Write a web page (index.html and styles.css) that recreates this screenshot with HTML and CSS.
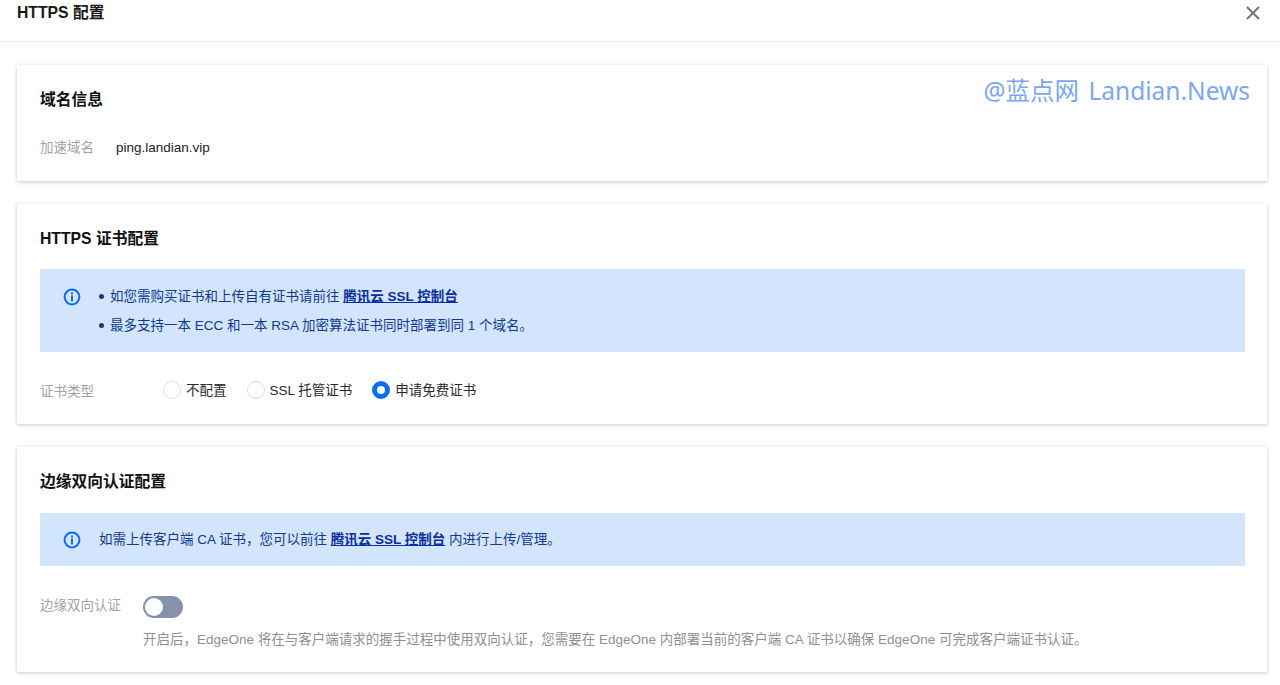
FILE: index.html
```html
<!DOCTYPE html>
<html lang="zh-CN">
<head>
<meta charset="utf-8">
<title>HTTPS 配置</title>
<link rel="stylesheet" href="styles.css">
</head>
<body>
<header class="header">
  <h1 class="header-title">HTTPS 配置</h1>
  <svg class="close" width="14" height="14" viewBox="0 0 14 14"><path d="M1 1L13 13M13 1L1 13" stroke="#757575" stroke-width="2" fill="none"/></svg>
</header>
<main class="content">
  <section class="card card-domain">
    <h2 class="card-title">域名信息</h2>
    <div class="row row-domain">
      <span class="label label-domain">加速域名</span>
      <span class="value">ping.landian.vip</span>
    </div>
    <div class="watermark">@蓝点网 Landian.News</div>
  </section>
  <section class="card card-cert">
    <h2 class="card-title">HTTPS 证书配置</h2>
    <div class="alert alert-multi">
      <svg class="info" width="18" height="18" viewBox="0 0 18 18"><circle cx="9" cy="9" r="7.4" fill="none" stroke="#0a6cff" stroke-width="2"/><rect x="8" y="4.4" width="2" height="2" fill="#0a6cff"/><rect x="8" y="7.4" width="2" height="6" fill="#0a6cff"/></svg>
      <ul class="alert-list">
        <li>如您需购买证书和上传自有证书请前往 <a class="link" href="#">腾讯云 SSL 控制台</a></li>
        <li>最多支持一本 ECC 和一本 RSA 加密算法证书同时部署到同 1 个域名。</li>
      </ul>
    </div>
    <div class="row row-radio">
      <span class="label label-cert">证书类型</span>
      <div class="radios">
        <span class="radio"><i class="dot"></i><span class="radio-text">不配置</span></span>
        <span class="radio"><i class="dot"></i><span class="radio-text">SSL 托管证书</span></span>
        <span class="radio"><i class="dot dot-on"></i><span class="radio-text">申请免费证书</span></span>
      </div>
    </div>
  </section>
  <section class="card card-edge">
    <h2 class="card-title">边缘双向认证配置</h2>
    <div class="alert alert-single">
      <svg class="info" width="18" height="18" viewBox="0 0 18 18"><circle cx="9" cy="9" r="7.4" fill="none" stroke="#0a6cff" stroke-width="2"/><rect x="8" y="4.4" width="2" height="2" fill="#0a6cff"/><rect x="8" y="7.4" width="2" height="6" fill="#0a6cff"/></svg>
      <span class="alert-text">如需上传客户端 CA 证书，您可以前往 <a class="link" href="#">腾讯云 SSL 控制台</a> 内进行上传/管理。</span>
    </div>
    <div class="row row-toggle">
      <span class="label label-edge">边缘双向认证</span>
      <div class="toggle-col">
        <span class="toggle"><i class="knob"></i></span>
        <p class="help">开启后，EdgeOne 将在与客户端请求的握手过程中使用双向认证，您需要在 EdgeOne 内部署当前的客户端 CA 证书以确保 EdgeOne 可完成客户端证书认证。</p>
      </div>
    </div>
  </section>
</main>
</body>
</html>
```
FILE: styles.css
```css
* { box-sizing: border-box; }
html, body { margin: 0; padding: 0; height: 685px; overflow: hidden; background: #fff; }
body { font-family: "Liberation Sans", "Noto Sans CJK SC", sans-serif; font-size: 13.5px; color: #1c1c1c; }
.header { height: 42px; border-bottom: 1px solid #e9e9e9; display: flex; justify-content: space-between; padding: 5px 20px 0 17px; }
.header-title { margin: 0; font-size: 15.75px; line-height: 16px; font-weight: 700; color: #1a1a1a; }
.close { margin-top: 1px; }
.content { padding: 23px 13px 0 17px; display: flex; flex-direction: column; gap: 23px; }
.card { position: relative; background: #fff; box-shadow: 0 1px 4px rgba(0,0,0,.22); padding: 0 22px 0 23px; }
.card-domain { height: 116px; padding-top: 26px; }
.card-cert { height: 220px; padding-top: 26px; }
.card-edge { height: 225px; padding-top: 26px; }
.card-title { margin: 0; font-size: 15.75px; line-height: 18px; font-weight: 700; color: #111; }
.row { display: flex; }
.label { color: #a3a3a3; line-height: 18px; flex: none; }
.value { line-height: 18px; color: #222; }
.row-domain { margin-top: 30px; }
.label-domain { width: 76px; }
.watermark { position: absolute; right: 17px; top: 9px; font-family: "Noto Sans", "Noto Sans CJK SC", sans-serif; font-size: 24.5px; line-height: 34px; color: #7aa7f7; word-spacing: 3px; }
.alert { background: #d3e5fd; display: flex; color: #0f3a92; }
.alert-multi { height: 83px; padding: 19px 0 0 23px; margin-top: 21px; }
.alert-single { height: 53px; padding: 18px 0 0 23px; margin-top: 22px; }
.alert-single .info { flex: none; }
.alert-list { margin: 0; padding: 0 0 0 18px; list-style: none; line-height: 18px; }
.alert-list li { position: relative; padding-left: 11px; margin-bottom: 11px; }
.alert-list li::before { content: ""; position: absolute; left: 0; top: 6px; width: 5px; height: 5px; border-radius: 50%; background: #0f3a92; }
.alert-text { margin-left: 18px; line-height: 18px; }
.link { color: #0a2ea0; font-weight: 700; text-decoration: underline; }
.row-radio { margin-top: 27px; align-items: center; }
.label-cert { width: 123px; padding-top: 4px; }
.radios { display: flex; gap: 20px; }
.radio { display: flex; align-items: center; gap: 5px; line-height: 18px; color: #2a2a2a; }
.radio-text { padding-top: 2px; }
.dot { width: 18px; height: 18px; border-radius: 50%; border: 1px solid #dcdfe6; background: #fff; }
.dot-on { border: 5.5px solid #0a6cff; }
.row-toggle { margin-top: 30px; }
.label-edge { width: 103px; padding-top: 1px; }
.toggle-col { display: flex; flex-direction: column; gap: 13px; }
.toggle { width: 40px; height: 22px; border-radius: 11px; background: #8592ab; padding: 2px; display: block; }
.knob { display: block; width: 18px; height: 18px; border-radius: 50%; background: #fff; }
.help { margin: 0; color: #948f88; line-height: 18px; white-space: nowrap; }
```
